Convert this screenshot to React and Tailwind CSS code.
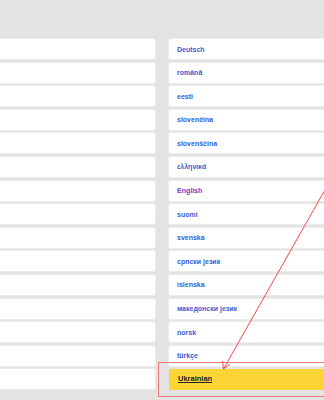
import React from 'react';

const languages = [
    { name: 'Deutsch' },
    { name: 'română' },
    { name: 'eesti' },
    { name: 'slovenčina' },
    { name: 'slovenščina' },
    { name: 'ελληνικά' },
    { name: 'English', visited: true },
    { name: 'suomi' },
    { name: 'svenska' },
    { name: 'српски језик' },
    { name: 'íslenska' },
    { name: 'македонски језик' },
    { name: 'norsk' },
    { name: 'türkçe' },
];

const App = () => {
    return (
        <div className="relative w-[324px] h-[400px] overflow-hidden bg-[#e3e3e3] font-['Liberation_Sans',Arial,sans-serif]">
            <div className="flex gap-[14px] pt-[39px] ml-[-10px]">
                {/* Left column */}
                <div className="w-[165px] flex flex-col gap-[3.6px] shrink-0">
                    {[...languages, { name: '' }].map((l, i) => (
                        <div key={i} className="h-[20px] bg-white rounded-[2px] shadow-[0_0_0_1px_#ececec]" />
                    ))}
                </div>

                {/* Right column */}
                <div className="w-[170px] flex flex-col gap-[3.6px] shrink-0">
                    {languages.map((l) => (
                        <div key={l.name} className="h-[20px] bg-white rounded-[2px] shadow-[0_0_0_1px_#ececec] flex items-center pl-[8px]">
                            <span className={`text-[7px] font-bold leading-none ${l.visited ? 'text-[#6f3fc4]' : 'text-[#3a5ed0]'}`}>{l.name}</span>
                        </div>
                    ))}
                    <div className="h-[21px] -mt-[0.6px] bg-[#fdd435] rounded-[2px] flex items-center pl-[9px]">
                        <span className="text-[7.5px] font-bold leading-none text-[#222] underline">Ukrainian</span>
                    </div>
                </div>
            </div>

            {/* Annotation box */}
            <div className="absolute left-[158px] top-[362px] w-[180px] h-[35px] border-[1.5px] border-[#f27a7a]" />

            {/* Annotation arrow */}
            <svg className="absolute inset-0" width="324" height="400" viewBox="0 0 324 400">
                <line x1="326" y1="188" x2="224" y2="368" stroke="#f04a4a" strokeWidth="1" />
                <polyline points="222.5,361 223.5,369 230,364" fill="none" stroke="#f04a4a" strokeWidth="1" />
            </svg>
        </div>
    );
};

export default App;
